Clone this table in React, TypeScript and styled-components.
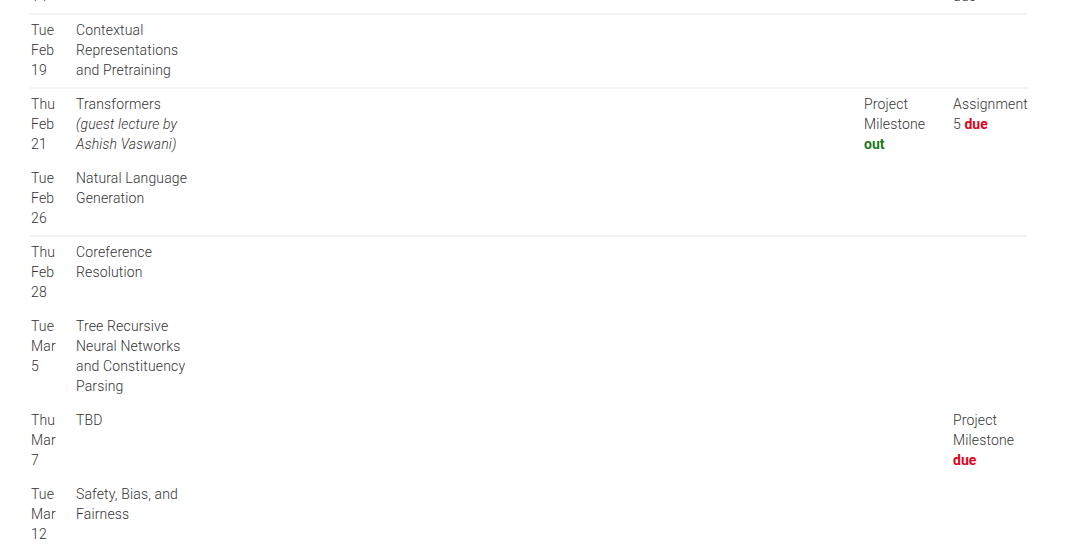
import React from "react";
import styled, { createGlobalStyle } from "styled-components";

const Global = createGlobalStyle`
  html, body { margin: 0; padding: 0; background: #ffffff; overflow: hidden; }
  body { font-family: Roboto, "Noto Sans", "Liberation Sans", sans-serif; }
`;

const Schedule = styled.div`
  margin: -61px 0 0 30px;
  width: 997px;
  font-family: Roboto, "Noto Sans", "Liberation Sans", sans-serif;
  font-size: 14px;
  line-height: 20px;
  font-weight: 300;
  letter-spacing: 0.15px;
  color: #333333;
`;

const Row = styled.div<{ $divider?: boolean }>`
  display: grid;
  grid-template-columns: 45px 120px 1fr 89px 75px;
  padding: ${(p) => (p.$divider ? "5px" : "7px")} 0 7px 1px;
  border-top: ${(p) => (p.$divider ? "2px solid #f3f3f3" : "none")};
`;

const DateCell = styled.div`
  display: flex;
  flex-direction: column;
`;

const Cell = styled.div<{ $pad?: number }>`
  min-width: 0;
  padding-left: ${(p) => p.$pad ?? 0}px;
  padding-right: ${(p) => (p.$pad ? 12 : 0)}px;
`;

const Guest = styled.div`
  font-style: italic;
`;

const Out = styled.span`
  color: #1c7a1c;
  font-weight: 700;
  letter-spacing: 0;
`;

const Due = styled.span`
  color: #e3001b;
  font-weight: 700;
  letter-spacing: 0;
`;

type Item = {
  date: [string, string, string];
  title: string;
  guest?: string;
  col4?: React.ReactNode;
  col5?: React.ReactNode;
  divider?: boolean;
};

const items: Item[] = [
  {
    date: ["Thu", "Feb", "14"],
    title: "Subword Models",
    col5: <>Project Proposal due</>,
  },
  {
    date: ["Tue", "Feb", "19"],
    title: "Contextual Representations and Pretraining",
    divider: true,
  },
  {
    date: ["Thu", "Feb", "21"],
    title: "Transformers",
    guest: "(guest lecture by Ashish Vaswani)",
    col4: (
      <>
        Project Milestone <Out>out</Out>
      </>
    ),
    col5: (
      <>
        Assignment 5 <Due>due</Due>
      </>
    ),
    divider: true,
  },
  { date: ["Tue", "Feb", "26"], title: "Natural Language Generation" },
  { date: ["Thu", "Feb", "28"], title: "Coreference Resolution", divider: true },
  {
    date: ["Tue", "Mar", "5"],
    title: "Tree Recursive Neural Networks and Constituency Parsing",
  },
  {
    date: ["Thu", "Mar", "7"],
    title: "TBD",
    col5: (
      <>
        Project Milestone <Due>due</Due>
      </>
    ),
  },
  { date: ["Tue", "Mar", "12"], title: "Safety, Bias, and Fairness" },
];

export default function App() {
  return (
    <>
      <Global />
      <Schedule>
        {items.map((it, i) => (
          <Row key={i} $divider={it.divider}>
            <DateCell>
              {it.date.map((d, j) => (
                <span key={j}>{d}</span>
              ))}
            </DateCell>
            <Cell>
              {it.title}
              {it.guest && <Guest>{it.guest}</Guest>}
            </Cell>
            <Cell />
            <Cell $pad={1}>{it.col4}</Cell>
            <Cell $pad={1}>{it.col5}</Cell>
          </Row>
        ))}
      </Schedule>
    </>
  );
}
